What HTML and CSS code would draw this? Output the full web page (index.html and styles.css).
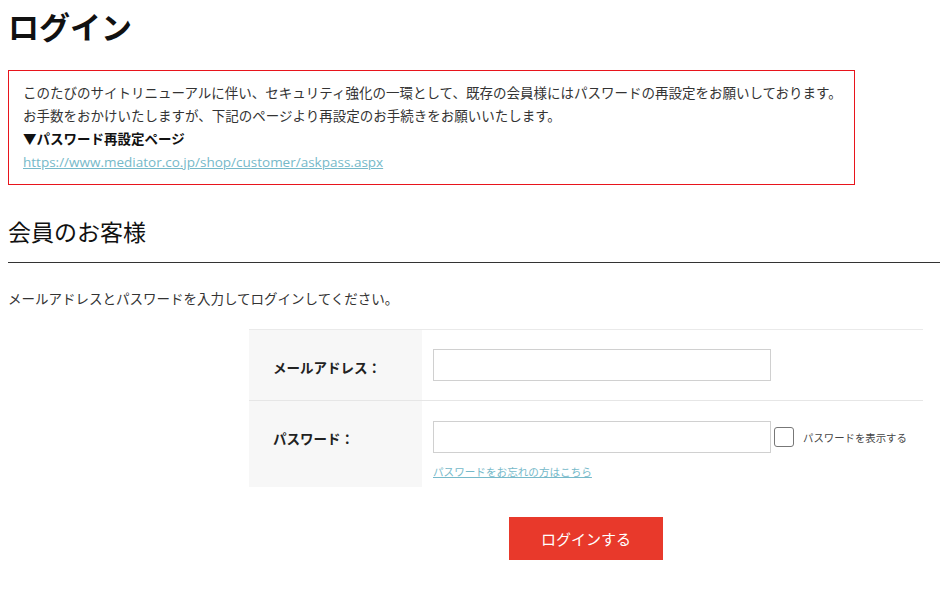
FILE: index.html
```html
<!DOCTYPE html>
<html lang="ja">
<head>
    <meta charset="UTF-8">
    <title>ログイン</title>
    <link rel="stylesheet" href="styles.css">
</head>
<body>
    <div class="page">
        <h1 class="page-title">ログイン</h1>

        <div class="notice">
            <p>このたびのサイトリニューアルに伴い、セキュリティ強化の一環として、既存の会員様にはパスワードの再設定をお願いしております。</p>
            <p>お手数をおかけいたしますが、下記のページより再設定のお手続きをお願いいたします。</p>
            <p class="notice-strong">▼パスワード再設定ページ</p>
            <p><a class="notice-link" href="#">https://www.mediator.co.jp/shop/customer/askpass.aspx</a></p>
        </div>

        <h2 class="section-title">会員のお客様</h2>
        <p class="lead">メールアドレスとパスワードを入力してログインしてください。</p>

        <div class="login-area">
            <div class="login-table">
                <div class="login-row">
                    <div class="login-label">メールアドレス：</div>
                    <div class="login-field">
                        <input class="text-input" type="text">
                    </div>
                </div>
                <div class="login-row">
                    <div class="login-label">パスワード：</div>
                    <div class="login-field">
                        <div class="pass-line">
                            <input class="text-input" type="password">
                            <label class="show-pass">
                                <span class="check-box"></span>
                                <span>パスワードを表示する</span>
                            </label>
                        </div>
                        <a class="forgot-link" href="#">パスワードをお忘れの方はこちら</a>
                    </div>
                </div>
            </div>

            <div class="button-area">
                <button class="login-button">ログインする</button>
            </div>
        </div>
    </div>
</body>
</html>
```

FILE: styles.css
```css
body {
    margin: 0;
    font-family: "Noto Sans CJK JP", "Noto Sans", sans-serif;
    color: #333;
    background-color: #fff;
}

.page {
    padding: 0 0 0 8px;
}

.page-title {
    margin: 0;
    padding-top: 6px;
    font-size: 31px;
    line-height: 40px;
    font-weight: bold;
    color: #111;
}

.notice {
    width: 817px;
    margin-top: 24px;
    padding: 10px 14px 10px 14px;
    border: 1px solid #e8141c;
}

.notice p {
    margin: 0;
    font-size: 13.5px;
    line-height: 23px;
    color: #333;
    white-space: nowrap;
}

.notice .notice-strong {
    font-weight: bold;
    color: #111;
}

.notice-link {
    font-family: "Open Sans", "Noto Sans", sans-serif;
    color: #76b9c9;
    text-decoration: underline;
}

.section-title {
    margin: 30px 0 0;
    padding-bottom: 15px;
    font-size: 23px;
    line-height: 32px;
    font-weight: normal;
    color: #111;
    border-bottom: 1px solid #333;
}

.lead {
    margin: 25px 0 0;
    font-size: 13.5px;
    line-height: 20px;
    color: #333;
}

.login-area {
    width: 674px;
    margin: 21px 0 0 241px;
}

.login-table {
    border-top: 1px solid #eaeaea;
}

.login-row {
    display: flex;
}

.login-row + .login-row {
    border-top: 1px solid #e6e6e6;
}

.login-label {
    width: 149px;
    padding: 27px 0 0 24px;
    background-color: #f7f7f7;
    font-size: 13.5px;
    font-weight: bold;
    color: #222;
}

.login-field {
    flex: 1;
    padding: 19px 0 19px 11px;
}

.login-row + .login-row .login-field {
    padding-top: 20px;
    padding-bottom: 6px;
}

.text-input {
    display: block;
    width: 338px;
    height: 32px;
    box-sizing: border-box;
    border: 1px solid #d0d0d0;
    margin: 0;
    background: #fff;
}

.pass-line {
    display: flex;
    align-items: center;
}

.show-pass {
    display: flex;
    align-items: center;
    margin-left: 3px;
    font-size: 10.4px;
    color: #444;
}

.check-box {
    width: 18px;
    height: 18px;
    border: 1px solid #777;
    border-radius: 3px;
    margin-right: 9px;
}

.forgot-link {
    display: inline-block;
    margin-top: 11px;
    font-size: 10.6px;
    line-height: 16px;
    color: #76b9c9;
    text-decoration: underline;
}

.button-area {
    display: flex;
    justify-content: center;
    margin-top: 30px;
}

.login-button {
    width: 154px;
    height: 43px;
    border: none;
    background-color: #e8392b;
    color: #fff;
    font-family: "Noto Sans CJK JP", sans-serif;
    font-size: 15px;
    cursor: pointer;
}
```
